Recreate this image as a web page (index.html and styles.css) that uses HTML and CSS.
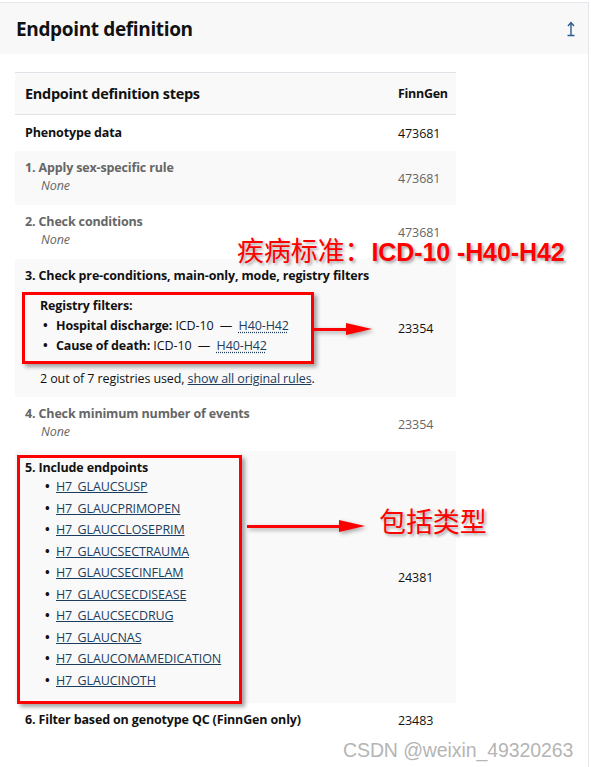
FILE: index.html
```html
<!DOCTYPE html>
<html>
<head>
<meta charset="utf-8">
<link rel="stylesheet" href="styles.css">
</head>
<body>
<div class="page">
  <div class="panel-head">
    <h2 class="panel-title">Endpoint definition</h2>
    <svg class="sort-icon" width="10" height="16" viewBox="0 0 10 16"><path d="M5 2 V14 M2 5 L5 1.5 L8 5 M1.5 14.5 H8.5" fill="none" stroke="#2b5d8c" stroke-width="1.4"/></svg>
  </div>
  <div class="panel-body">
    <table class="steps">
      <colgroup><col class="col-step"><col class="col-num"></colgroup>
      <thead>
        <tr><th class="c-step">Endpoint definition steps</th><th class="c-num">FinnGen</th></tr>
      </thead>
      <tbody>
        <tr class="row white"><td class="c-step"><b>Phenotype data</b></td><td class="c-num">473681</td></tr>
        <tr class="row grey muted"><td class="c-step"><b>1. Apply sex-specific rule</b><div class="none">None</div></td><td class="c-num">473681</td></tr>
        <tr class="row white muted"><td class="c-step"><b>2. Check conditions</b><div class="none">None</div></td><td class="c-num">473681</td></tr>
        <tr class="row grey"><td class="c-step"><b>3. Check pre-conditions, main-only, mode, registry filters</b>
          <div class="filters">
            <b>Registry filters:</b>
            <ul class="flist">
              <li><b>Hospital discharge:</b> ICD-10 &nbsp;—&nbsp; <abbr>H40-H42</abbr></li>
              <li><b>Cause of death:</b> ICD-10 &nbsp;—&nbsp; <abbr>H40-H42</abbr></li>
            </ul>
          </div>
          <div class="usage">2 out of 7 registries used, <a href="#">show all original rules</a>.</div>
        </td><td class="c-num">23354</td></tr>
        <tr class="row white muted"><td class="c-step"><b>4. Check minimum number of events</b><div class="none">None</div></td><td class="c-num">23354</td></tr>
        <tr class="row grey"><td class="c-step"><b>5. Include endpoints</b>
          <ul class="elist">
            <li><a href="#">H7_GLAUCSUSP</a></li>
            <li><a href="#">H7_GLAUCPRIMOPEN</a></li>
            <li><a href="#">H7_GLAUCCLOSEPRIM</a></li>
            <li><a href="#">H7_GLAUCSECTRAUMA</a></li>
            <li><a href="#">H7_GLAUCSECINFLAM</a></li>
            <li><a href="#">H7_GLAUCSECDISEASE</a></li>
            <li><a href="#">H7_GLAUCSECDRUG</a></li>
            <li><a href="#">H7_GLAUCNAS</a></li>
            <li><a href="#">H7_GLAUCOMAMEDICATION</a></li>
            <li><a href="#">H7_GLAUCINOTH</a></li>
          </ul>
        </td><td class="c-num">24381</td></tr>
        <tr class="row white"><td class="c-step"><b>6. Filter based on genotype QC (FinnGen only)</b></td><td class="c-num">23483</td></tr>
      </tbody>
    </table>
  </div>

  <div class="mark box1"></div>
  <div class="mark box2"></div>
  <div class="arrow arrow1"><span class="shaft"></span><span class="head"></span></div>
  <div class="arrow arrow2"><span class="shaft"></span><span class="head"></span></div>
  <div class="note note1"><span class="cn">疾病标准：</span><span class="en">ICD-10 -H40-H42</span></div>
  <div class="note note2"><span class="cn">包括类型</span></div>
  <div class="watermark">CSDN @weixin_49320263</div>
</div>
</body>
</html>
```
FILE: styles.css
```css
* { box-sizing: border-box; }
html, body { margin: 0; padding: 0; background: #fff; }
body {
  font-family: "Open Sans", "Noto Sans", sans-serif;
  font-size: 12.5px;
  color: #111;
  letter-spacing: -0.1px;
}
b { letter-spacing: -0.15px; }
.page {
  position: relative;
  width: 589px;
  height: 767px;
  margin-top: 2px;
  border-top: 1px solid #e3e6ea;
  border-right: 1px solid #e3e6ea;
}
.panel-head {
  height: 51px;
  background: #f8f8f8;
  display: flex;
  align-items: center;
  justify-content: space-between;
  padding: 0 12px 0 16px;
}
.panel-title {
  margin: 0;
  font-size: 19px;
  font-weight: 700;
  color: #111;
  letter-spacing: -0.35px;
}
.sort-icon { margin-top: 1px; }
.panel-body { padding: 18px 15px 0 15px; }
.steps {
  width: 441px;
  border-collapse: collapse;
  table-layout: fixed;
}
.col-step { width: 373px; }
.col-num { width: 68px; }
.steps thead th {
  background: #f9f9f9;
  border-top: 1px solid #dfe3e7;
  border-bottom: 1px solid #dfe3e7;
  height: 42px;
  text-align: left;
  vertical-align: middle;
  padding: 0 10px;
  font-weight: 700;
}
.steps thead th.c-step { font-size: 14.5px; letter-spacing: -0.3px; }
.steps thead th.c-num { font-size: 12.5px; letter-spacing: -0.3px; }
.c-step { padding: 0 10px; }
.c-num { padding: 0 10px; vertical-align: middle; white-space: nowrap; }
.row td { vertical-align: middle; }
.row td.c-step { vertical-align: top; padding-top: 8px; padding-bottom: 10px; }
.row.white { background: #fff; }
.row.grey { background: #f9f9f9; }
.row.muted { color: #666; }
.row.muted b { color: #666; }
.none { font-style: italic; padding-left: 16px; margin-top: 1px; line-height: 18px; }
.row:nth-child(1) td.c-step { padding-top: 9px; padding-bottom: 10px; }
.filters { margin-top: 13px; padding-left: 15px; }
.flist { margin: 3px 0 0 0; padding-left: 16px; list-style: none; }
.flist li { position: relative; line-height: 20px; }
.flist li:first-child { margin-top: -1px; }
.flist li::before { content: "•"; position: absolute; left: -13px; font-weight: 700; }
abbr { text-decoration: underline dotted; text-underline-offset: 2px; color: #1c3d5e; }
.usage { padding-left: 15px; margin-top: 14px; margin-bottom: 0; }
a { color: #1c3d5e; text-decoration: underline; }
.elist { margin: 0 0 2px 0; padding-left: 31px; list-style: none; }
.elist li { position: relative; line-height: 21.5px; }
.elist li::before { content: "•"; position: absolute; left: -11px; color: #111; font-weight: 700; }

/* annotations */
.mark {
  position: absolute;
  border: 3px solid #f00;
  box-shadow: 3px 3px 4px rgba(0,0,0,0.35);
}
.box1 { left: 22px; top: 289px; width: 292px; height: 72px; }
.box2 { left: 17px; top: 452px; width: 225px; height: 249px; }
.arrow { position: absolute; height: 12px; display: flex; align-items: center; filter: drop-shadow(2px 2px 2px rgba(0,0,0,0.35)); }
.arrow .shaft { height: 3px; background: #f00; flex: 1; }
.arrow .head { width: 0; height: 0; border-top: 6px solid transparent; border-bottom: 6px solid transparent; border-left: 26px solid #f00; margin-left: -6px; }
.arrow1 { left: 314px; top: 320px; width: 58px; }
.arrow2 { left: 247px; top: 517px; width: 118px; }
.note { position: absolute; color: #f00; text-shadow: 2px 2px 3px rgba(0,0,0,0.35); white-space: nowrap; }
.note .cn { font-family: "Noto Sans CJK SC", sans-serif; font-weight: 400; }
.note1 { left: 237px; top: 229px; font-size: 27px; line-height: 36px; }
.note1 .en { font-family: "Liberation Sans", Arial, sans-serif; font-weight: 700; font-size: 25px; }
.note2 { left: 379px; top: 500px; font-size: 27px; line-height: 36px; }
.watermark {
  position: absolute;
  left: 343px;
  top: 736px;
  font-family: "Liberation Sans", Arial, sans-serif;
  font-size: 19.5px;
  color: #b5b5b5;
  text-shadow: 0 0 1px #fff;
}
```
